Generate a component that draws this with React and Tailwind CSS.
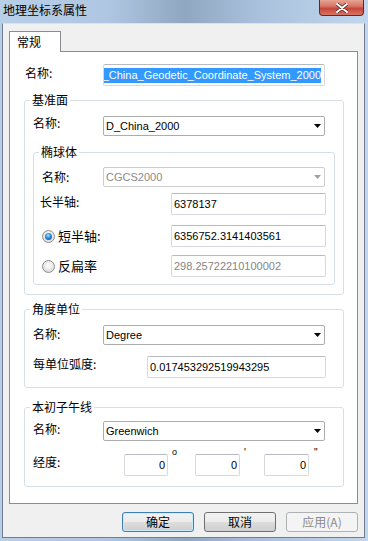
import React from "react";

const CJK = "font-['Noto_Sans_CJK_SC',sans-serif]";
const LATIN = "font-['Liberation_Sans','Noto_Sans_CJK_SC',sans-serif]";

function Label({ children, w, mt = "mt-0" }) {
  return (
    <span className={`${w} ${mt} shrink-0 text-[12px] leading-[14px] text-black ${CJK}`}>{children}</span>
  );
}

function Combo({ value, disabled }) {
  return (
    <div
      className={`w-[222px] h-[20px] flex items-center justify-between pl-[2px] pr-[3px] rounded-[2px] border bg-white text-[11px] ${LATIN} ${
        disabled ? "border-[#cdcdcd] text-[#8a8a8a]" : "border-[#acacac] text-black"
      }`}
    >
      <span>{value}</span>
      <svg width="7" height="4" viewBox="0 0 7 4">
        <path d="M0 0h7L3.5 4z" fill={disabled ? "#a0a0a0" : "#000"} />
      </svg>
    </div>
  );
}

function TextBox({ w, value, disabled, right }) {
  return (
    <div
      className={`${w} h-[22px] flex items-center px-[2px] border border-[#d5d8dc] border-t-[#b7bbc0] rounded-[2px] bg-white text-[11px] ${LATIN} ${
        disabled ? "text-[#858585]" : "text-black"
      } ${right ? "justify-end" : ""}`}
    >
      {value}
    </div>
  );
}

function Radio({ checked }) {
  return (
    <div className="w-[13px] h-[13px] shrink-0 rounded-full border border-[#8e8f8f] bg-[radial-gradient(circle_at_50%_40%,#ffffff_0%,#e6e6e6_55%,#c9c9c9_100%)] flex items-center justify-center">
      {checked && (
        <div className="w-[7px] h-[7px] rounded-full bg-[radial-gradient(circle_at_45%_35%,#a8e0ff_0%,#2a8ad8_45%,#0b4c8c_100%)]" />
      )}
    </div>
  );
}

function Group({ title, w, mt, pb, children }) {
  return (
    <fieldset className={`${w} ${mt} ${pb} border border-[#d5dfe5] rounded-[3px]`}>
      <legend className={`ml-[5px] px-[2px] h-[16px] text-[12px] leading-[16px] text-black ${CJK}`}>{title}</legend>
      {children}
    </fieldset>
  );
}

function Button({ children, kind }) {
  const base = `w-[72px] h-[20px] flex items-center justify-center rounded-[3px] border text-[12px] leading-none ${CJK}`;
  if (kind === "disabled")
    return <div className={`${base} border-[#adb2b5] bg-[#f4f4f4] text-[#8a8a8a]`}>{children}</div>;
  if (kind === "default")
    return (
      <div
        className={`${base} border-[#3c7fb1] text-black shadow-[inset_0_0_0_1px_#c6ecfa] bg-[linear-gradient(180deg,#f2f2f2_0%,#ebebeb_50%,#dddddd_50%,#cfcfcf_100%)]`}
      >
        {children}
      </div>
    );
  return (
    <div
      className={`${base} border-[#707070] text-black bg-[linear-gradient(180deg,#f2f2f2_0%,#ebebeb_50%,#dddddd_50%,#cfcfcf_100%)]`}
    >
      {children}
    </div>
  );
}

export default function App() {
  return (
    <div className="w-[368px] h-[541px] flex flex-col overflow-hidden bg-[linear-gradient(90deg,#b8cfe8_0%,#aec6e1_30%,#8fa7c0_50%,#a9c1dc_70%,#c2d7ee_100%)]">
      {/* title bar */}
      <div className="h-[23px] shrink-0 flex items-start">
        <span className={`ml-[3px] mt-[2px] text-[12px] leading-[16px] text-black ${CJK}`}>地理坐标系属性</span>
        <div className="ml-auto mr-[4px] w-[45px] h-[16px] rounded-b-[4px] border border-t-0 border-[#5d2a27] bg-[linear-gradient(180deg,#e7a493_0%,#d57062_45%,#c5453a_55%,#d9735f_100%)] flex items-center justify-center">
          <svg width="12" height="10" viewBox="0 0 12 10">
            <path d="M1 1l10 8M11 1L1 9" stroke="#4a2a28" strokeWidth="3.4" strokeLinecap="round" />
            <path d="M1 1l10 8M11 1L1 9" stroke="#ffffff" strokeWidth="2" strokeLinecap="round" />
          </svg>
        </div>
      </div>

      {/* client area */}
      <div className="flex-1 ml-[2px] mr-[3px] mb-[3px] border-l border-r border-b border-t border-[#6f7f90] border-t-[#d7e3f0] bg-[#f0f0f0] flex flex-col">
        <div className="ml-[6px] mt-[7px] relative z-10 w-[52px] h-[21px] -mb-px border border-b-0 border-[#898c95] bg-white flex items-start">
          <span className={`ml-[7px] mt-[2px] text-[12px] leading-[16px] text-black ${CJK}`}>常规</span>
        </div>

        <div className="ml-[6px] w-[349px] h-[453px] border border-[#898c95] bg-white flex flex-col">
          {/* name row */}
          <div className="mt-[12px] pl-[15px] flex items-start">
            <Label w="w-[78px]" mt="mt-[2px]">名称:</Label>
            <div className="w-[222px] h-[22px] flex items-center justify-end overflow-hidden px-[3px] border border-[#d5d8dc] border-t-[#b7bbc0] rounded-[2px] bg-white">
              <span className={`whitespace-nowrap bg-[#3399ff] text-white text-[11px] leading-[15px] ${LATIN}`}>
                GCS_China_Geodetic_Coordinate_System_2000
              </span>
            </div>
          </div>

          {/* 基准面 */}
          <div className="ml-[14px]">
            <Group title="基准面" w="w-[320px]" mt="mt-[6px]" pb="pb-[9px]">
              <div className="mt-[8px] pl-[8px] flex items-start">
                <Label w="w-[70px]">名称:</Label>
                <Combo value="D_China_2000" />
              </div>
              <div className="ml-[8px]">
                <Group title="椭球体" w="w-[302px]" mt="mt-[8px]" pb="pb-[7px]">
                  <div className="mt-[7px] pl-[8px] flex items-start">
                    <Label w="w-[61px]" mt="mt-[3px]">名称:</Label>
                    <Combo value="CGCS2000" disabled />
                  </div>
                  <div className="mt-[6px] pl-[6px] flex items-start">
                    <Label w="w-[131px]" mt="mt-[2px]">长半轴:</Label>
                    <TextBox w="w-[155px]" value="6378137" />
                  </div>
                  <div className="mt-[10px] pl-[8px] flex items-center">
                    <Radio checked />
                    <span className={`ml-[3px] w-[113px] text-[13px] leading-[16px] text-black ${CJK}`}>短半轴:</span>
                    <TextBox w="w-[155px]" value="6356752.3141403561" />
                  </div>
                  <div className="mt-[8px] pl-[8px] flex items-center">
                    <Radio />
                    <span className={`ml-[3px] w-[113px] text-[13px] leading-[16px] text-black ${CJK}`}>反扁率</span>
                    <TextBox w="w-[155px]" value="298.25722210100002" disabled />
                  </div>
                </Group>
              </div>
            </Group>

            {/* 角度单位 */}
            <Group title="角度单位" w="w-[320px]" mt="mt-[6px]" pb="pb-[9px]">
              <div className="mt-[8px] pl-[8px] flex items-start">
                <Label w="w-[70px]" mt="mt-[2px]">名称:</Label>
                <Combo value="Degree" />
              </div>
              <div className="mt-[11px] pl-[8px] flex items-start">
                <Label w="w-[114px]" mt="mt-[1px]">每单位弧度:</Label>
                <TextBox w="w-[179px]" value="0.017453292519943295" />
              </div>
            </Group>

            {/* 本初子午线 */}
            <Group title="本初子午线" w="w-[320px]" mt="mt-[11px]" pb="pb-[10px]">
              <div className="mt-[6px] pl-[8px] flex items-start">
                <Label w="w-[70px]" mt="mt-[1px]">名称:</Label>
                <Combo value="Greenwich" />
              </div>
              <div className="mt-[13px] pl-[8px] flex items-start">
                <Label w="w-[91px]" mt="mt-[1px]">经度:</Label>
                <TextBox w="w-[44px]" value="0" right />
                <span className={`w-[27px] -mt-[7px] pl-[4px] text-[9px] leading-[10px] text-black ${LATIN}`}>o</span>
                <TextBox w="w-[45px]" value="0" right />
                <span className={`w-[24px] -mt-[6px] pl-[4px] text-[10px] leading-[10px] text-black ${LATIN}`}>'</span>
                <TextBox w="w-[45px]" value="0" right />
                <span className={`-mt-[6px] pl-[5px] text-[10px] leading-[10px] text-black ${LATIN}`}>"</span>
              </div>
            </Group>
          </div>
        </div>

        {/* buttons */}
        <div className="ml-[6px] w-[349px] mt-[8px] flex justify-end gap-[10px]">
          <Button kind="default">确定</Button>
          <Button>取消</Button>
          <Button kind="disabled">应用(A)</Button>
        </div>
      </div>
    </div>
  );
}
